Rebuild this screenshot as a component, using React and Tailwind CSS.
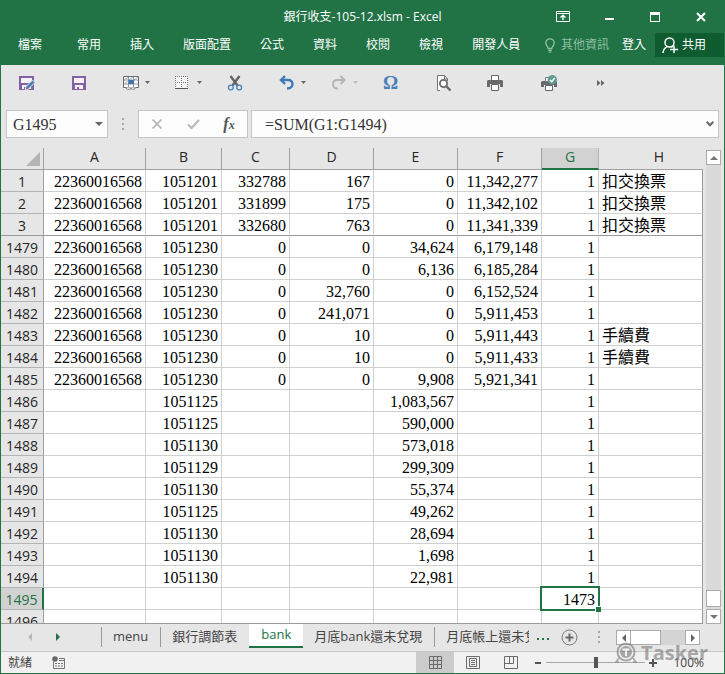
import React, { useState } from 'react';
import clsx from 'clsx';

const MENUS = ['常用', '插入', '版面配置', '公式', '資料', '校閱', '檢視', '開發人員'];

const COLUMNS = [
	{ id: 'A', width: 'w-[102px]' },
	{ id: 'B', width: 'w-[76px]' },
	{ id: 'C', width: 'w-[68px]' },
	{ id: 'D', width: 'w-[84px]' },
	{ id: 'E', width: 'w-[84px]' },
	{ id: 'F', width: 'w-[84px]' },
	{ id: 'G', width: 'w-[57px]' },
	{ id: 'H', width: '' },
];

const ACCOUNT = '22360016568';

const ROWS = [
	[1, ACCOUNT, '1051201', '332788', '167', '0', '11,342,277', '1', '扣交換票'],
	[2, ACCOUNT, '1051201', '331899', '175', '0', '11,342,102', '1', '扣交換票'],
	[3, ACCOUNT, '1051201', '332680', '763', '0', '11,341,339', '1', '扣交換票'],
	[1479, ACCOUNT, '1051230', '0', '0', '34,624', '6,179,148', '1', ''],
	[1480, ACCOUNT, '1051230', '0', '0', '6,136', '6,185,284', '1', ''],
	[1481, ACCOUNT, '1051230', '0', '32,760', '0', '6,152,524', '1', ''],
	[1482, ACCOUNT, '1051230', '0', '241,071', '0', '5,911,453', '1', ''],
	[1483, ACCOUNT, '1051230', '0', '10', '0', '5,911,443', '1', '手續費'],
	[1484, ACCOUNT, '1051230', '0', '10', '0', '5,911,433', '1', '手續費'],
	[1485, ACCOUNT, '1051230', '0', '0', '9,908', '5,921,341', '1', ''],
	[1486, '', '1051125', '', '', '1,083,567', '', '1', ''],
	[1487, '', '1051125', '', '', '590,000', '', '1', ''],
	[1488, '', '1051130', '', '', '573,018', '', '1', ''],
	[1489, '', '1051129', '', '', '299,309', '', '1', ''],
	[1490, '', '1051130', '', '', '55,374', '', '1', ''],
	[1491, '', '1051125', '', '', '49,262', '', '1', ''],
	[1492, '', '1051130', '', '', '28,694', '', '1', ''],
	[1493, '', '1051130', '', '', '1,698', '', '1', ''],
	[1494, '', '1051130', '', '', '22,981', '', '1', ''],
	[1495, '', '', '', '', '', '', '1473', ''],
	[1496, '', '', '', '', '', '', '', ''],
];

const SELECTED_ROW = 1495;
const SELECTED_COL = 'G';
const FROZEN_ROW = 3;

function Icon({ children, size = 16, className }) {
	return (
		<svg width={size} height={size} viewBox="0 0 16 16" fill="none" className={clsx('shrink-0', className)} aria-hidden="true">
			{children}
		</svg>
	);
}

function Caret({ className }) {
	return (
		<svg width="5" height="3" viewBox="0 0 5 3" className={className} aria-hidden="true">
			<path d="M0 0h5L2.500 3z" fill="currentColor" />
		</svg>
	);
}

function Arrow({ dir, className }) {
	const paths = { left: 'M6 0v8L2 4z', right: 'M2 0v8l4-4z', up: 'M0 6h8L4 2z', down: 'M0 2h8L4 6z' };
	return (
		<svg width="8" height="8" viewBox="0 0 8 8" className={className} aria-hidden="true">
			<path d={paths[dir]} fill="currentColor" />
		</svg>
	);
}

function Dots() {
	return (
		<svg width="2" height="12" viewBox="0 0 2 12" aria-hidden="true">
			<path d="M0 0h2v2H0zM0 5h2v2H0zM0 10h2v2H0z" fill="#a8a8a8" />
		</svg>
	);
}

const TOOLS = [
	{
		name: '另存新檔',
		icon: (
			<Icon>
				<path d="M0 1h15v14H0z" fill="#8361a5" />
				<path d="M2 3h11v5H2z" fill="#f6f2f9" />
				<path d="M3 10h9v4H3z" fill="#f6f2f9" />
				<path d="M5 12h2v3H5z" fill="#8361a5" />
				<path d="M6 15.500l1-4L13.500 5 16 7.500 9.500 14z" fill="#4d7fb0" stroke="#e6e6e6" />
			</Icon>
		),
	},
	{
		name: '儲存檔案',
		icon: (
			<Icon>
				<path d="M1 1h14v14H1z" fill="#8361a5" />
				<path d="M3 3h10v5H3z" fill="#f6f2f9" />
				<path d="M4 10h8v4H4z" fill="#f6f2f9" />
				<path d="M6 12h2v3H6z" fill="#8361a5" />
			</Icon>
		),
	},
	{
		name: '樞紐分析表',
		caret: true,
		icon: (
			<Icon>
				<path d="M.5 1.500h15v11H.5z" fill="#fff" stroke="#6a6a6a" />
				<path d="M1 5h14M1 9h14M5.500 2v10M10.500 2v10" stroke="#8798a6" />
				<path d="M1.500 5l4-3M6 5l4-3M11 5l4-3M1.500 9l3-3" stroke="#8798a6" strokeWidth="0.8" />
				<path d="M5.500 5h5.500v4H5.500z" fill="#3f74ad" />
				<path d="M3 12.500c0 2 3 2.500 5 1 2 1.500 4 1 5-1" stroke="#6f6f6f" fill="#fff" />
			</Icon>
		),
	},
	{
		name: '框線',
		caret: true,
		icon: (
			<Icon>
				<path d="M0 1h13v13H0z" fill="#f6f6f6" />
				<path d="M0 1.500h13M0 7.500h13M.5 1v13M6.500 1v13M12.500 1v13" stroke="#777" strokeDasharray="1 1" />
				<path d="M0 13.500h13" stroke="#555" />
			</Icon>
		),
	},
	{
		name: '剪下',
		icon: (
			<Icon>
				<path d="M3.500 1l7 9.500M12.500 1l-7 9.500" stroke="#636363" strokeWidth="2.400" />
				<circle cx="3.800" cy="12.500" r="2.400" stroke="#4a83be" strokeWidth="1.300" />
				<circle cx="12.200" cy="12.500" r="2.400" stroke="#4a83be" strokeWidth="1.300" />
			</Icon>
		),
	},
	{
		name: '復原',
		caret: true,
		icon: (
			<Icon>
				<path d="M6 1L2 5l4 4M2.500 5H9c3 0 4.500 1.500 4.500 4S12 13.500 8 13.500" stroke="#3f7ab5" strokeWidth="2.400" />
			</Icon>
		),
	},
	{
		name: '取消復原',
		caret: true,
		disabled: true,
		icon: (
			<Icon>
				<path d="M9.500 1l4 4-4 4M13 5H6.500C3.500 5 2 6.500 2 9s1.500 4.500 5 4.500" stroke="#b5b5b5" strokeWidth="2" />
			</Icon>
		),
	},
	{
		name: '符號',
		icon: <span className="font-['Liberation_Serif',serif] text-[19px] leading-6 font-bold text-[#4a7fb8]">Ω</span>,
	},
	{
		name: '預覽列印',
		icon: (
			<Icon>
				<path d="M5 15.500H2.500V.5h7L12.500 4v2" fill="#fff" stroke="#737373" />
				<path d="M9.500.5V4h3" stroke="#737373" />
				<circle cx="8.500" cy="8.500" r="3.600" fill="#fff" stroke="#6b6b6b" strokeWidth="1.800" />
				<path d="M11 11l4.500 4.500" stroke="#6b6b6b" strokeWidth="2.400" />
			</Icon>
		),
	},
	{
		name: '列印',
		icon: (
			<Icon>
				<path d="M1 5h14l1 1v6H0V6z" fill="#6a6a6a" />
				<path d="M4.500 .5h7v5h-7z" fill="#fff" stroke="#666" />
				<path d="M3 9h10v3H3z" fill="#e6e6e6" />
				<path d="M4.500 9.500h7v6h-7z" fill="#fff" stroke="#666" />
			</Icon>
		),
	},
	{
		name: '快速列印',
		icon: (
			<Icon className="ml-[2px]">
				<path d="M1 6h14l1 1v5H0V7z" fill="#6a6a6a" />
				<path d="M4.500 2.500h5v4h-5z" fill="#fff" stroke="#777" />
				<path d="M3 10h10v2H3z" fill="#e6e6e6" />
				<path d="M4.500 10.500h7v5h-7z" fill="#fff" stroke="#666" />
				<circle cx="11.300" cy="4.800" r="4.700" fill="#5f9e8f" />
				<path d="M9 5l1.700 1.700 3-3.700" stroke="#fff" strokeWidth="1.400" />
			</Icon>
		),
	},
	{
		name: '其他命令',
		icon: (
			<Icon>
				<path d="M6 5l3.500 3L6 11zM10 5l3.500 3-3.500 3z" fill="#666" />
			</Icon>
		),
	},
];

function TitleBar() {
	return (
		<div className="grid h-[33px] grid-cols-[1fr_auto_1fr] items-center">
			<span />
			<h1 className="text-xs font-normal">
				銀行收支-105-12.xlsm - Excel
			</h1>
			<div className="flex justify-end">
				<button aria-label="功能區顯示選項" className="flex h-8 w-[46px] items-center justify-center">
					<svg width="14" height="11" viewBox="0 0 14 11" fill="none">
						<path d="M.5.5h13v10H.5zM1 2.500h12" stroke="#fff" />
						<path d="M7 9V4.500M4.500 6.500L7 4.200l2.500 2.300" stroke="#fff" strokeWidth="1.400" />
					</svg>
				</button>
				<button aria-label="最小化" className="flex h-8 w-[46px] items-center justify-center">
					<span className="mt-1 h-[2px] w-[9px] bg-white" />
				</button>
				<button aria-label="最大化" className="flex h-8 w-[46px] items-center justify-center">
					<span className="h-[10px] w-[10px] border border-t-3 border-white" />
				</button>
				<button aria-label="關閉" className="flex h-8 w-[46px] items-center justify-center">
					<svg width="10" height="10" viewBox="0 0 10 10">
						<path d="M1 1l8 8M9 1L1 9" stroke="#fff" strokeWidth="2" />
					</svg>
				</button>
			</div>
		</div>
	);
}

function MenuBar() {
	return (
		<nav className="flex h-8 items-start text-xs">
			<button className="mr-[35px] ml-[17px] h-6">檔案</button>
			<div className="flex gap-[29px]">
				{MENUS.map((m) => (
					<button key={m} className="h-6 whitespace-nowrap">
						{m}
					</button>
				))}
			</div>
			<button className="ml-auto flex h-6 items-center gap-[6px] whitespace-nowrap text-[#8fbfa3]">
				<svg width="10" height="15" viewBox="0 0 10 15" fill="none">
					<path d="M3.200 10.500c0-2-2.400-2.700-2.400-5.500a4.200 4.200 0 018.400 0c0 2.800-2.400 3.500-2.400 5.500zM3.200 12.300h3.600M3.800 14.200h2.400" stroke="#8fbfa3" strokeWidth="1.300" />
				</svg>
				其他資訊
			</button>
			<button className="ml-[13px] h-6 whitespace-nowrap">登入</button>
			<button className="ml-[9px] flex h-6 w-[69px] items-center gap-1 bg-[#0e5c2f] pl-[7px] whitespace-nowrap">
				<svg width="16" height="16" viewBox="0 0 16 16" fill="none">
					<circle cx="7.500" cy="5.500" r="4.500" stroke="#fff" strokeWidth="1.500" />
					<path d="M1 16c.3-3 1.500-5 4-6.300M9.500 9.500l1 1M8 12.500h8M12 8.500v7.500" stroke="#fff" strokeWidth="1.500" />
				</svg>
				共用
			</button>
		</nav>
	);
}

function QuickAccess() {
	return (
		<div className="flex h-[35px] items-center pl-[18px]">
			{TOOLS.map((t) => (
				<button key={t.name} aria-label={t.name} disabled={t.disabled} className="flex h-6 w-[52px] items-center gap-[6px]">
					{t.icon}
					{t.caret && <Caret className={t.disabled ? 'text-[#bdbdbd]' : 'text-[#666666]'} />}
				</button>
			))}
		</div>
	);
}

function FormulaBar({ formula, onChange }) {
	return (
		<div className="flex h-12 items-center pr-[5px] pl-[5px]">
			<div className="flex h-7 w-[102px] items-center border border-[#c6c6c6] bg-[#fdfdfd] pr-1 pl-[6px]">
				<input
					aria-label="名稱方塊"
					defaultValue="G1495"
					className="w-0 flex-1 bg-transparent pt-[2px] font-['Liberation_Serif',serif] text-base text-[#333333] outline-none"
				/>
				<button aria-label="名稱清單">
					<svg width="8" height="4" viewBox="0 0 8 4">
						<path d="M0 0h8L4 4z" fill="#666" />
					</svg>
				</button>
			</div>
			<div className="flex w-[30px] justify-center">
				<Dots />
			</div>
			<div className="flex h-7 w-[110px] items-center border border-[#c6c6c6] bg-[#fdfdfd]">
				<button aria-label="取消" className="flex flex-1 justify-center">
					<svg width="10" height="10" viewBox="0 0 10 10">
						<path d="M.5.5l9 9M9.500.5l-9 9" stroke="#b9b9b9" strokeWidth="1.800" />
					</svg>
				</button>
				<button aria-label="輸入" className="flex flex-1 justify-center">
					<svg width="13" height="10" viewBox="0 0 13 10" fill="none">
						<path d="M1 5.500L4.500 9 12 1" stroke="#b9b9b9" strokeWidth="2.200" />
					</svg>
				</button>
				<button aria-label="插入函數" className="flex-1 font-['Liberation_Serif',serif] text-base leading-4 font-bold text-[#555555] italic">
					f<span className="text-xs">x</span>
				</button>
			</div>
			<div className="ml-[3px] flex h-7 flex-1 items-center border border-[#c6c6c6] bg-[#fdfdfd] pr-1 pl-[13px]">
				<input
					aria-label="資料編輯列"
					value={formula}
					onChange={(e) => onChange(e.target.value)}
					className="w-0 flex-1 bg-transparent pt-[2px] font-['Liberation_Serif',serif] text-base text-[#333333] outline-none"
				/>
				<button aria-label="展開資料編輯列">
					<svg width="8" height="6" viewBox="0 0 8 6" fill="none">
						<path d="M.7.8L4 4.200 7.300.8" stroke="#666" strokeWidth="2" />
					</svg>
				</button>
			</div>
		</div>
	);
}

function Sheet() {
	return (
		<div className="min-w-0 flex-1 overflow-hidden border-b border-[#9b9b9b] bg-white">
			<table className="w-full table-fixed border-separate border-spacing-0">
				<thead>
					<tr className="h-[22px] bg-[#e6e6e6] text-sm leading-[17px] text-[#262626]">
						<th className="w-[43px] border-r border-b border-[#a0a0a0] p-0" aria-label="全選">
							<svg width="14" height="14" viewBox="0 0 14 14" className="mr-[3px] ml-auto">
								<path d="M14 0v14H0z" fill="#b4b4b4" />
							</svg>
						</th>
						{COLUMNS.map((c) => (
							<th
								key={c.id}
								scope="col"
								className={clsx(
									'p-0 font-normal',
									c.width,
									c.id === SELECTED_COL
										? 'border-r border-b-2 border-r-[#b5b5b5] border-b-[#217346] bg-[#d2d2d2] pb-[3px] text-[#217346]'
										: 'border-b border-[#a0a0a0] pb-1',
									c.id !== SELECTED_COL && c.id !== 'H' && 'border-r',
									c.id === 'H' && 'pl-4',
								)}
							>
								{c.id}
							</th>
						))}
					</tr>
				</thead>
				<tbody>
					{ROWS.map(([num, ...cells]) => {
						const line = num === FROZEN_ROW ? 'border-b-[#999999]' : 'border-b-[#d0d0d0]';
						return (
							<tr key={num} className="h-[22px]">
								<th
									scope="row"
									className={clsx(
										'border-b p-0 pt-[2px] text-sm leading-[19px] font-normal',
										num === FROZEN_ROW ? 'border-b-[#999999]' : 'border-b-[#b4b4b4]',
										num === SELECTED_ROW
											? 'border-r-2 border-r-[#217346] bg-[#d2d2d2] text-[#217346]'
											: 'border-r border-r-[#a0a0a0] bg-[#e6e6e6] text-[#262626]',
									)}
								>
									{num}
								</th>
								{cells.map((value, i) => {
									const col = COLUMNS[i].id;
									const selected = num === SELECTED_ROW && col === SELECTED_COL;
									return (
										<td
											key={col}
											className={clsx(
												"border-r border-b p-0 px-[3px] pt-[2px] font-['Liberation_Serif','Noto_Sans_CJK_TC',serif] text-base leading-[19px] whitespace-nowrap text-black",
												line,
												col === 'H' ? 'border-r-[#999999] text-left' : 'border-r-[#d0d0d0] text-right',
												selected && 'relative',
											)}
										>
											{value}
											{selected && (
												<>
													<span className="absolute -inset-[2px] border-2 border-[#217346]" />
													<span className="absolute -right-[3px] -bottom-[3px] h-[6px] w-[6px] border-t border-l border-white bg-[#217346]" />
												</>
											)}
										</td>
									);
								})}
							</tr>
						);
					})}
				</tbody>
			</table>
		</div>
	);
}

function VerticalScroll() {
	return (
		<div className="flex w-[21px] flex-col items-center pt-[2px]">
			<div className="flex w-[15px] flex-1 flex-col bg-[#dadada]">
				<button aria-label="向上捲動" className="flex h-[15px] items-center justify-center border border-[#ababab] bg-white text-[#777777]">
					<Arrow dir="up" />
				</button>
				<div className="mt-auto mb-[2px] h-[17px] border border-[#ababab] bg-white" />
				<button aria-label="向下捲動" className="flex h-[15px] items-center justify-center border border-[#ababab] bg-white text-[#777777]">
					<Arrow dir="down" />
				</button>
			</div>
		</div>
	);
}

function SheetTabs() {
	const tab = 'mt-[3px] h-5 shrink-0 pr-3 pl-[11px] leading-[18px] whitespace-nowrap flex items-start';
	return (
		<div className="flex h-7 items-start border-b border-[#c8c8c8] text-[13px] text-[#444444]">
			<div className="flex h-[26px] w-[100px] items-center pl-[15px]">
				<button aria-label="上一張工作表" className="flex w-7 justify-center text-[#b8b8b8]">
					<Arrow dir="left" />
				</button>
				<button aria-label="下一張工作表" className="flex w-7 justify-center text-[#217346]">
					<Arrow dir="right" />
				</button>
			</div>
			<div className="flex min-w-0 flex-1 items-start overflow-hidden">
				<button className={clsx(tab, 'border-l border-[#999999]')}>menu</button>
				<button className={clsx(tab, 'border-l border-[#999999]')}>銀行調節表</button>
				<button className="h-6 shrink-0 border-b-2 border-[#217346] bg-white px-3 text-[#217346]">
					bank
				</button>
				<button className={tab}>月底bank還未兌現</button>
				<button className={clsx(tab, 'border-l border-[#999999]')}>月底帳上還未兌現</button>
			</div>
			<button aria-label="更多工作表" className="ml-2 flex h-[26px] items-center">
				<svg width="12" height="10" viewBox="0 0 12 10">
					<path d="M0 6h2v2H0zM5 6h2v2H5zM10 6h2v2h-2z" fill="#217346" />
				</svg>
			</button>
			<button aria-label="新增工作表" className="ml-3 flex h-[26px] items-center">
				<svg width="17" height="17" viewBox="0 0 17 17" fill="none">
					<circle cx="8.500" cy="8.500" r="7.500" stroke="#767676" />
					<path d="M8.500 4.500v8M4.500 8.500h8" stroke="#6a6a6a" strokeWidth="2" />
				</svg>
			</button>
			<div className="ml-5 flex h-[26px] items-center">
				<Dots />
			</div>
			<div className="mt-[6px] mr-6 ml-4 flex h-[15px] w-[84px] bg-[#d4d4d4]">
				<button aria-label="向左捲動" className="flex w-[15px] items-center justify-center border border-[#ababab] bg-white text-[#666666]">
					<Arrow dir="left" />
				</button>
				<div className="-ml-px w-[31px] border border-[#ababab] bg-white" />
				<button aria-label="向右捲動" className="ml-auto flex w-[15px] items-center justify-center border border-[#ababab] bg-white text-[#666666]">
					<Arrow dir="right" />
				</button>
			</div>
		</div>
	);
}

function StatusBar() {
	const [zoom, setZoom] = useState(100);
	return (
		<div className="flex h-[21px] items-center bg-[#f1f1f1] text-xs text-[#444444]">
			<span className="ml-[7px]">就緒</span>
			<button aria-label="錄製巨集" className="ml-5">
				<svg width="14" height="14" viewBox="0 0 14 14" fill="none">
					<path d="M1.500 5.500v7h11v-10H7" stroke="#777" />
					<circle cx="3" cy="3" r="2.800" fill="#666" />
					<path d="M7 4.500h5M3 7.500h2M6 7.500h2M9 7.500h2M3 10h2M6 10h2M9 10h2" stroke="#777" />
				</svg>
			</button>
			<div className="ml-auto flex h-full">
				<button aria-label="標準模式" className="flex w-[38px] items-center justify-center bg-[#cbcbcb]">
					<svg width="13" height="13" viewBox="0 0 13 13" fill="none">
						<path d="M.5.5h12v12H.5zM4.500 0v13M8.500 0v13M0 4.500h13M0 8.500h13" stroke="#6b6b6b" />
					</svg>
				</button>
				<button aria-label="整頁模式" className="flex w-[38px] items-center justify-center">
					<svg width="14" height="13" viewBox="0 0 14 13" fill="none">
						<path d="M.5.5h13v12H.5zM3.500 2.500h7v8h-7zM5 4.500h4M5 6.500h4M5 8.500h4" stroke="#6b6b6b" />
					</svg>
				</button>
				<button aria-label="分頁預覽" className="flex w-[38px] items-center justify-center">
					<svg width="14" height="13" viewBox="0 0 14 13" fill="none">
						<path d="M.5.5h13v12H.5zM5.500 1v6.500M9.500 1v6.500M1 7.500h8.500" stroke="#6b6b6b" />
					</svg>
				</button>
			</div>
			<button aria-label="縮小" onClick={() => setZoom(zoom - 10)} className="flex h-4 w-4 items-center justify-center">
				<span className="h-[2px] w-[6px] bg-[#555555]" />
			</button>
			<input
				type="range"
				aria-label="縮放"
				min="0"
				max="200"
				value={zoom}
				onChange={(e) => setZoom(Number(e.target.value))}
				className="h-[11px] w-[99px] appearance-none bg-[linear-gradient(#a8a8a8,#a8a8a8)] bg-size-[100%_1px] bg-center bg-no-repeat [&::-webkit-slider-thumb]:h-[11px] [&::-webkit-slider-thumb]:w-1 [&::-webkit-slider-thumb]:appearance-none [&::-webkit-slider-thumb]:bg-[#555555]"
			/>
			<button aria-label="放大" onClick={() => setZoom(zoom + 10)} className="flex h-4 w-4 items-center justify-center">
				<svg width="8" height="8" viewBox="0 0 8 8">
					<path d="M3 0h2v3h3v2H5v3H3V5H0V3h3z" fill="#555" />
				</svg>
			</button>
			<button className="mr-5 ml-3">{zoom}%</button>
		</div>
	);
}

function Watermark() {
	return (
		<div className="pointer-events-none absolute right-4 bottom-[8px] flex items-center gap-1 text-[#777777] opacity-60">
			<svg width="22" height="22" viewBox="0 0 22 22" fill="none">
				<circle cx="11" cy="10" r="8.500" stroke="currentColor" strokeWidth="2" />
				<circle cx="11" cy="10" r="6" fill="currentColor" />
				<path d="M7.500 7.500h7M11 7v7" stroke="#fff" strokeWidth="2" />
				<path d="M4 16l-3 4h3M18 16l3 4h-3" stroke="currentColor" strokeWidth="1.500" />
			</svg>
			<span className="font-['Open_Sans',sans-serif] text-[20px] leading-6 font-bold">Tasker</span>
		</div>
	);
}

export default function App() {
	const [formula, setFormula] = useState('=SUM(G1:G1494)');

	return (
		<div className="relative flex h-screen flex-col border-x border-b border-[#217346] bg-[#e6e6e6] font-['Open_Sans','Noto_Sans_CJK_TC',sans-serif]">
			<header className="bg-[#217346] text-white">
				<TitleBar />
				<MenuBar />
			</header>
			<QuickAccess />
			<FormulaBar formula={formula} onChange={setFormula} />
			<main className="flex min-h-0 flex-1">
				<Sheet />
				<VerticalScroll />
			</main>
			<SheetTabs />
			<StatusBar />
			<Watermark />
		</div>
	);
}
